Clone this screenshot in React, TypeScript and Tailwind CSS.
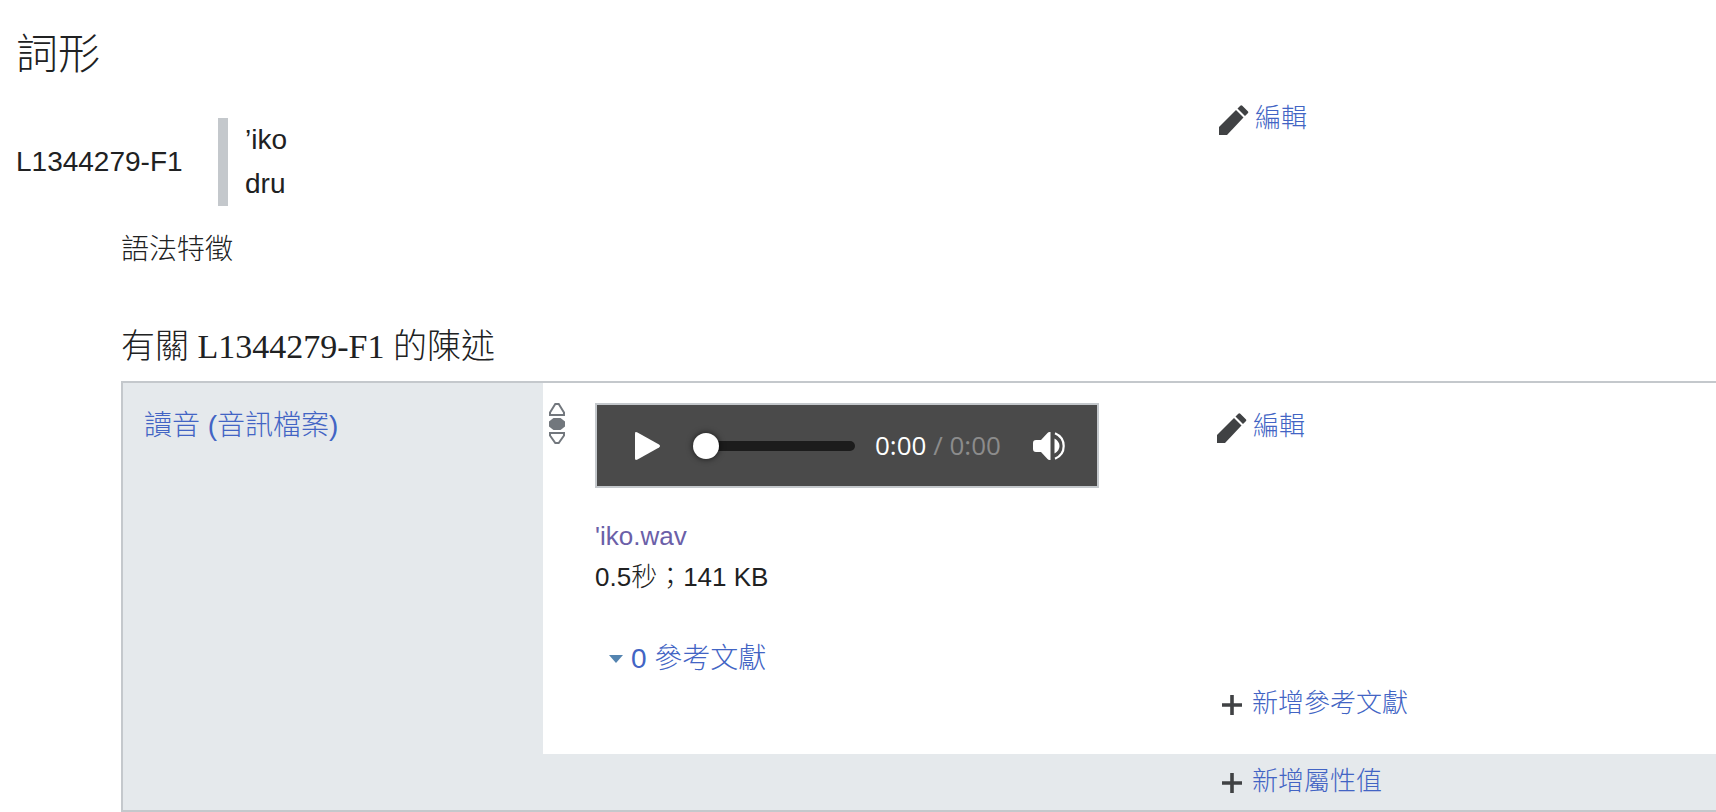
import { useState } from "react";
import type { ReactNode } from "react";

function PencilIcon() {
  return (
    <svg viewBox="0 0 30 30" className="size-[30px] shrink-0" fill="#404244" aria-hidden="true">
      <path d="M0 22 17 5l7.500 7.500L8 30H0z" />
      <path d="M18.500 3.500 21.300.7q1-1 2 0l5.500 5.500q1 1 0 2L26 11z" />
    </svg>
  );
}

function PlusIcon() {
  return (
    <svg viewBox="0 0 20 20" className="size-5 shrink-0" fill="#404244" aria-hidden="true">
      <path d="M8.200 0h3.600v8.200H20v3.600h-8.200V20H8.200v-8.200H0V8.200h8.200z" />
    </svg>
  );
}

function RankIcon() {
  return (
    <svg viewBox="0 0 16 42" className="h-[42px] w-4" fill="none" stroke="#72777d" strokeWidth="2" aria-hidden="true">
      <path d="M1 12V9.500L6.300 1h3.400L15 9.500V12z" />
      <path d="M0 18.500 4.500 15h7l4.500 3.500v5L11.500 27h-7L0 23.500z" fill="#72777d" stroke="none" />
      <path d="M1 30h14v2.500L9.700 40H6.300L1 32.500z" />
    </svg>
  );
}

function PlayIcon() {
  return (
    <svg viewBox="0 0 25 28" className="h-7 w-[25px]" fill="white" aria-hidden="true">
      <path d="M0 1.500Q0-.7 2.500.6L24 12.500q2 1.500 0 3L2.500 27.400Q0 28.700 0 26.500z" />
    </svg>
  );
}

function VolumeIcon() {
  return (
    <svg viewBox="0 0 32 28" className="h-7 w-8" fill="white" aria-hidden="true">
      <path d="M3 8h5l6.500-7q.8-1 2.200-1h.8v28h-.8q-1.400 0-2.200-1L8 20H3q-3 0-3-3v-6q0-3 3-3z" />
      <path d="M21.500 6.500q5 3 5 7.500t-5 7.500z" />
      <path d="M22 1.200Q30.700 5 30.700 14T22 26.800" fill="none" stroke="white" strokeWidth="2.200" />
    </svg>
  );
}

function ActionLink({ icon, children }: { icon: ReactNode; children: ReactNode }) {
  return (
    <a href="#" className="flex items-center text-[26px] leading-9 font-light text-[#4264c4]">
      {icon}
      {children}
    </a>
  );
}

function EditLink() {
  return <ActionLink icon={<span className="mt-1 mr-[6px]"><PencilIcon /></span>}>編輯</ActionLink>;
}

function AddLink({ children }: { children: ReactNode }) {
  return <ActionLink icon={<span className="mt-1 mr-[10px] ml-[5px]"><PlusIcon /></span>}>{children}</ActionLink>;
}

function AudioPlayer() {
  const [position, setPosition] = useState(0);

  return (
    <div className="flex h-[85px] w-[504px] items-center border-2 border-[#c4c8cc] bg-[#4a4a4a] pl-[38px]">
      <button type="button" aria-label="播放">
        <PlayIcon />
      </button>
      <input
        type="range"
        aria-label="進度"
        min={0}
        max={100}
        value={position}
        onChange={(e) => setPosition(Number(e.target.value))}
        className="ml-[33px] h-[26px] w-[162px] appearance-none bg-transparent [&::-webkit-slider-runnable-track]:h-[10px] [&::-webkit-slider-runnable-track]:rounded-full [&::-webkit-slider-runnable-track]:bg-[#1c1c1c] [&::-webkit-slider-thumb]:-mt-2 [&::-webkit-slider-thumb]:size-[26px] [&::-webkit-slider-thumb]:appearance-none [&::-webkit-slider-thumb]:rounded-full [&::-webkit-slider-thumb]:bg-white [&::-webkit-slider-thumb]:shadow-[0_0_6px_rgba(0,0,0,0.7)]"
      />
      <div className="ml-5 w-[158px] font-['Open_Sans',sans-serif] text-[26px] whitespace-nowrap text-white">
        0:00 <span className="text-[#8c8c8c]">/ 0:00</span>
      </div>
      <button type="button" aria-label="音量">
        <VolumeIcon />
      </button>
    </div>
  );
}

function Statement() {
  return (
    <div className="flex border-2 border-r-0 border-[#c4c8cc] bg-[#e5e9ec]">
      <div className="w-[420px] shrink-0 pt-[21px] pl-[21px]">
        <a href="#" className="leading-[44px] font-light text-[#4264c4]">
          讀音 (音訊檔案)
        </a>
      </div>

      <div className="min-w-0 flex-1">
        <div className="flex bg-white">
          <div className="w-[52px] shrink-0 pt-5 pl-[6px]">
            <RankIcon />
          </div>
          <div className="flex-1 pt-5 pb-[73px]">
            <AudioPlayer />
            <div className="mt-7 text-[26px] leading-[41px] font-light">
              <a href="#" className="text-[#6b60a8]">
                'iko.wav
              </a>
              <p>0.5秒；141 KB</p>
            </div>
            <a href="#" className="mt-[39px] ml-[14px] flex items-center leading-[44px] font-light text-[#4264c4]">
              <svg viewBox="0 0 14 8" className="mr-2 h-2 w-[14px]" fill="#5484b0" aria-hidden="true">
                <path d="M0 0h14L7 8z" />
              </svg>
              0 參考文獻
            </a>
          </div>
          <div className="flex w-[499px] shrink-0 flex-col justify-between pt-[25px] pb-[33px]">
            <EditLink />
            <AddLink>新增參考文獻</AddLink>
          </div>
        </div>

        {/* Footer row of the statement group */}
        <div className="flex justify-end pt-[9px] pb-[11px]">
          <div className="w-[499px]">
            <AddLink>新增屬性值</AddLink>
          </div>
        </div>
      </div>
    </div>
  );
}

export default function App() {
  return (
    <main className="bg-white pt-[25px] font-['Liberation_Sans','Noto_Sans_CJK_TC',sans-serif] text-[28px] text-[#202122]">
      <h2 className="pl-4 font-['Liberation_Serif','Noto_Sans_CJK_TC',serif] text-[42px] leading-[60px] font-light">
        詞形
      </h2>

      <div className="mt-[15px] flex">
        <div className="mt-[18px] flex flex-1 items-center pl-4 leading-[44px]">
          <div className="w-[202px]">L1344279-F1</div>
          <div className="border-l-[10px] border-[#c4c8cc] pl-[17px]">
            <p>’iko</p>
            <p>dru</p>
          </div>
        </div>
        <div className="w-[497px] shrink-0">
          <EditLink />
        </div>
      </div>

      <section className="pl-[121px]">
        <h3 className="mt-[22px] leading-[44px] font-light">語法特徵</h3>
        <h3 className="mt-[53px] mb-3 font-['Liberation_Serif','Noto_Sans_CJK_TC',serif] text-[34px] leading-[44px] font-light">
          有關 L1344279-F1 的陳述
        </h3>
        <Statement />
      </section>
    </main>
  );
}
